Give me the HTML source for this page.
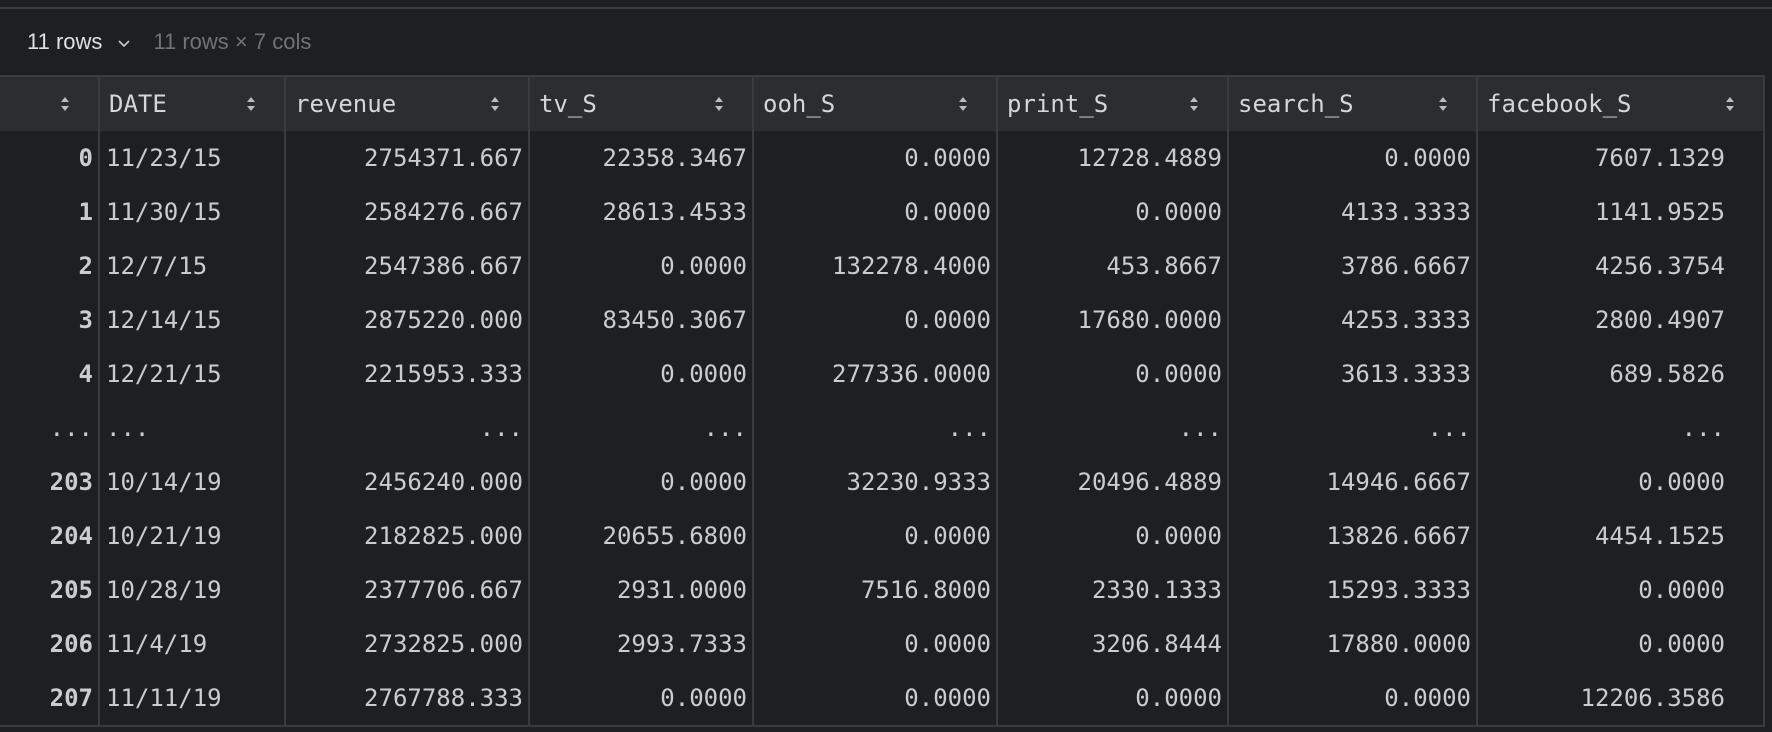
<!DOCTYPE html>
<html><head><meta charset="utf-8"><style>
body{margin:0;width:1772px;height:732px;background:#1e1f22;overflow:hidden;font-family:"DejaVu Sans Mono","Liberation Mono",monospace;}
.top{position:absolute;left:0;top:7px;width:1772px;height:2px;background:#393b40;}
.bar{position:absolute;left:27px;top:29px;font-family:"Liberation Sans",sans-serif;font-size:22px;color:#dfe1e5;}
.bar .g{color:#6f737a;margin-left:22px;}
.bar svg{vertical-align:middle;margin-left:15px}
table{position:absolute;left:0;top:75px;border-collapse:collapse;table-layout:fixed;font-size:24px;color:#c9ccd1;}
th{background:#2b2d30;height:54px;text-align:left;font-weight:normal;padding:0 0 0 9px;border-right:2px solid #393b40;border-top:2px solid #393b40;position:relative;color:#d4d6da}
td{height:54px;padding:0 5px 0 0;text-align:right;border-right:2px solid #393b40;white-space:nowrap}
td:last-child{padding-right:38px}
td.d{text-align:left;padding-left:6px}
td.i{font-weight:bold}
td.n{font-weight:normal}
.s{position:absolute;right:28px;top:19px}
tr:last-child td{border-bottom:2px solid #393b40}
</style></head><body>
<div class="top"></div>
<div class="bar">11 rows<svg width="14" height="10" viewBox="0 0 14 10"><path d="M2 3l5 5 5-5" stroke="#c9ccd1" stroke-width="1.6" fill="none"/></svg><span class="g">11 rows × 7 cols</span></div>
<table>
<colgroup><col style="width:99px"><col style="width:186px"><col style="width:244px"><col style="width:224px"><col style="width:244px"><col style="width:231px"><col style="width:249px"><col style="width:287px"></colgroup>
<tr><th><svg class="s" width="10" height="16" viewBox="0 0 10 16"><path d="M1 6l4-5 4 5zM1 10l4 5 4-5z" fill="#b9bcc1"/></svg></th>
<th>DATE<svg class="s" width="10" height="16" viewBox="0 0 10 16"><path d="M1 6l4-5 4 5zM1 10l4 5 4-5z" fill="#b9bcc1"/></svg></th>
<th>revenue<svg class="s" width="10" height="16" viewBox="0 0 10 16"><path d="M1 6l4-5 4 5zM1 10l4 5 4-5z" fill="#b9bcc1"/></svg></th>
<th>tv_S<svg class="s" width="10" height="16" viewBox="0 0 10 16"><path d="M1 6l4-5 4 5zM1 10l4 5 4-5z" fill="#b9bcc1"/></svg></th>
<th>ooh_S<svg class="s" width="10" height="16" viewBox="0 0 10 16"><path d="M1 6l4-5 4 5zM1 10l4 5 4-5z" fill="#b9bcc1"/></svg></th>
<th>print_S<svg class="s" width="10" height="16" viewBox="0 0 10 16"><path d="M1 6l4-5 4 5zM1 10l4 5 4-5z" fill="#b9bcc1"/></svg></th>
<th>search_S<svg class="s" width="10" height="16" viewBox="0 0 10 16"><path d="M1 6l4-5 4 5zM1 10l4 5 4-5z" fill="#b9bcc1"/></svg></th>
<th>facebook_S<svg class="s" width="10" height="16" viewBox="0 0 10 16"><path d="M1 6l4-5 4 5zM1 10l4 5 4-5z" fill="#b9bcc1"/></svg></th></tr>
<tr><td class="i">0</td><td class="d">11/23/15</td><td>2754371.667</td><td>22358.3467</td><td>0.0000</td><td>12728.4889</td><td>0.0000</td><td>7607.1329</td></tr>
<tr><td class="i">1</td><td class="d">11/30/15</td><td>2584276.667</td><td>28613.4533</td><td>0.0000</td><td>0.0000</td><td>4133.3333</td><td>1141.9525</td></tr>
<tr><td class="i">2</td><td class="d">12/7/15</td><td>2547386.667</td><td>0.0000</td><td>132278.4000</td><td>453.8667</td><td>3786.6667</td><td>4256.3754</td></tr>
<tr><td class="i">3</td><td class="d">12/14/15</td><td>2875220.000</td><td>83450.3067</td><td>0.0000</td><td>17680.0000</td><td>4253.3333</td><td>2800.4907</td></tr>
<tr><td class="i">4</td><td class="d">12/21/15</td><td>2215953.333</td><td>0.0000</td><td>277336.0000</td><td>0.0000</td><td>3613.3333</td><td>689.5826</td></tr>
<tr><td class="n">...</td><td class="d">...</td><td>...</td><td>...</td><td>...</td><td>...</td><td>...</td><td>...</td></tr>
<tr><td class="i">203</td><td class="d">10/14/19</td><td>2456240.000</td><td>0.0000</td><td>32230.9333</td><td>20496.4889</td><td>14946.6667</td><td>0.0000</td></tr>
<tr><td class="i">204</td><td class="d">10/21/19</td><td>2182825.000</td><td>20655.6800</td><td>0.0000</td><td>0.0000</td><td>13826.6667</td><td>4454.1525</td></tr>
<tr><td class="i">205</td><td class="d">10/28/19</td><td>2377706.667</td><td>2931.0000</td><td>7516.8000</td><td>2330.1333</td><td>15293.3333</td><td>0.0000</td></tr>
<tr><td class="i">206</td><td class="d">11/4/19</td><td>2732825.000</td><td>2993.7333</td><td>0.0000</td><td>3206.8444</td><td>17880.0000</td><td>0.0000</td></tr>
<tr><td class="i">207</td><td class="d">11/11/19</td><td>2767788.333</td><td>0.0000</td><td>0.0000</td><td>0.0000</td><td>0.0000</td><td>12206.3586</td></tr>
</table>
</body></html>
